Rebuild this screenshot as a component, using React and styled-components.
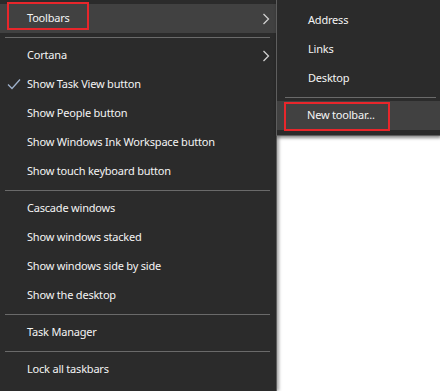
import React from "react";
import styled, { createGlobalStyle } from "styled-components";

const GlobalStyle = createGlobalStyle`
  html, body {
    margin: 0;
    padding: 0;
    background: #ffffff;
  }
  body {
    font-family: "Noto Sans", "Open Sans", sans-serif;
  }
`;

const Stage = styled.div`
  position: relative;
  width: 440px;
  height: 391px;
  overflow: hidden;
  background: #ffffff;
`;

const MainMenu = styled.ul`
  margin: 0;
  padding: 4px 0 0 0;
  list-style: none;
  width: 277px;
  height: 100%;
  box-sizing: border-box;
  background: #2b2b2b;
  border-right: 1px solid #5e5e5e;
  box-shadow: 2px 0 3px rgba(0, 0, 0, 0.35);
`;

const Item = styled.li`
  position: relative;
  height: 29px;
  display: flex;
  align-items: center;
  padding: 0 6px 2px ${(p) => p.$indent || 7}px;
  box-sizing: border-box;
  color: #f4f4f4;
  font-size: 11px;
  letter-spacing: -0.2px;
  white-space: nowrap;
  background: ${(p) => (p.$active ? "#414141" : "transparent")};
`;

const CheckSlot = styled.span`
  width: 20px;
  flex: none;
  display: flex;
  align-items: center;
`;

const Separator = styled.li`
  height: 8px;
  display: flex;
  align-items: center;
  padding: 0 ${(p) => p.$right || 6}px 0 ${(p) => p.$left || 5}px;

  &::after {
    content: "";
    flex: 1;
    height: 1px;
    background: #6a6a6a;
  }
`;

const Chevron = styled.svg`
  margin-left: auto;
  margin-top: 2px;
  flex: none;
`;

const Callout = styled.span`
  position: absolute;
  left: ${(p) => p.$left}px;
  top: ${(p) => p.$top}px;
  width: ${(p) => p.$width}px;
  height: ${(p) => p.$height}px;
  box-sizing: border-box;
  border: 2px solid #e8262b;
  pointer-events: none;
`;

const SubMenu = styled.ul`
  position: absolute;
  left: 276px;
  top: 0;
  width: 164px;
  margin: 0;
  padding: 6px 0 5px 0;
  list-style: none;
  box-sizing: border-box;
  background: #2b2b2b;
  border-left: 1px solid #5e5e5e;
  border-bottom: 1px solid #5e5e5e;
  box-shadow: 1px 2px 3px rgba(0, 0, 0, 0.45);
`;

const ChevronIcon = () => (
  <Chevron width="8" height="12" viewBox="0 0 8 12">
    <path d="M1.5 1 L6.5 6 L1.5 11" fill="none" stroke="#d0d0d0" strokeWidth="1.3" />
  </Chevron>
);

const CheckIcon = () => (
  <svg width="14" height="12" viewBox="0 0 14 12">
    <path d="M1 6.5 L5 10.5 L13 1.5" fill="none" stroke="#9fb2cc" strokeWidth="1.3" />
  </svg>
);

const mainGroups = [
  [{ label: "Toolbars", sub: true, active: true, callout: true }],
  [
    { label: "Cortana", sub: true },
    { label: "Show Task View button", checked: true },
    { label: "Show People button" },
    { label: "Show Windows Ink Workspace button" },
    { label: "Show touch keyboard button" },
  ],
  [
    { label: "Cascade windows" },
    { label: "Show windows stacked" },
    { label: "Show windows side by side" },
    { label: "Show the desktop" },
  ],
  [{ label: "Task Manager" }],
  [{ label: "Lock all taskbars" }],
];

const App = () => {
  return (
    <>
      <GlobalStyle />
      <Stage>
        <MainMenu>
          {mainGroups.map((group, gi) => (
            <React.Fragment key={gi}>
              {gi > 0 && <Separator />}
              {group.map((item) => (
                <Item key={item.label} $active={item.active}>
                  <CheckSlot>{item.checked && <CheckIcon />}</CheckSlot>
                  {item.label}
                  {item.sub && <ChevronIcon />}
                  {item.callout && (
                    <Callout $left={7} $top={-2} $width={82} $height={28} />
                  )}
                </Item>
              ))}
            </React.Fragment>
          ))}
        </MainMenu>

        <SubMenu>
          <Item $indent={31}>Address</Item>
          <Item $indent={31}>Links</Item>
          <Item $indent={31}>Desktop</Item>
          <Separator $left={8} $right={4} />
          <Item $indent={30} $active>
            New toolbar...
            <Callout $left={7} $top={1} $width={106} $height={29} />
          </Item>
        </SubMenu>
      </Stage>
    </>
  );
};

export default App;
